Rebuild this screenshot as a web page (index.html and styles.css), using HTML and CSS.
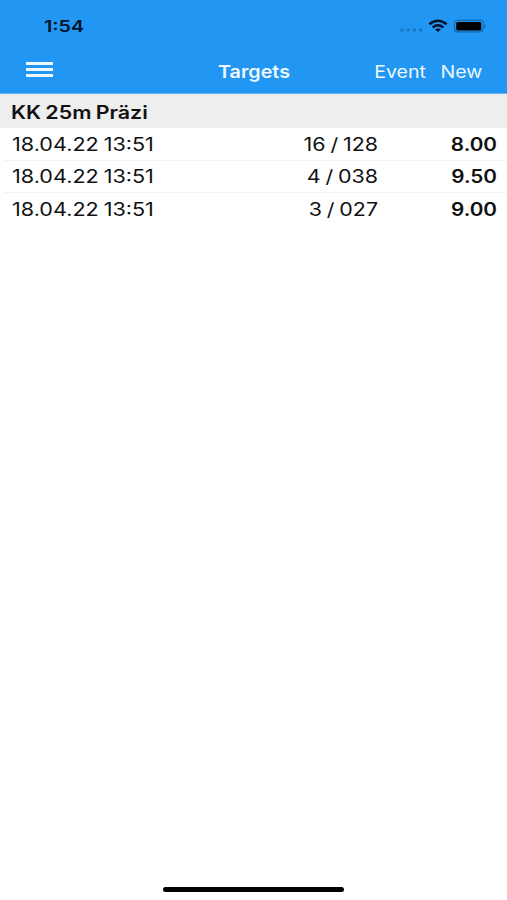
FILE: index.html
```html
<!DOCTYPE html>
<html lang="en">
<head>
<meta charset="utf-8">
<title>Targets</title>
<link rel="stylesheet" href="styles.css">
</head>
<body>
<div class="screen">
  <header class="header">
    <div class="status">
      <span class="time">1:54</span>
      <svg class="signals" width="90" height="16" viewBox="0 0 90 16">
        <g fill="#1a78c4"><circle cx="6" cy="12" r="1.8"/><circle cx="12.2" cy="12" r="1.8"/><circle cx="18.4" cy="12" r="1.8"/><circle cx="24.6" cy="12" r="1.8"/></g>
        <g fill="none" stroke="#001326" stroke-width="2.5"><path d="M33.4 6.2Q42 -.7 50.6 6.2"/><path d="M36.7 9.4Q42 5.2 47.3 9.4"/></g>
        <path d="M39.2 11.4Q42 9.5 44.8 11.4L42 13.9Z" fill="#001326"/>
        <rect x="58.4" y="2.4" width="28.6" height="11.4" rx="3" fill="none" stroke="#1769ac" stroke-width="1.2"/>
        <rect x="60.2" y="3.9" width="25" height="8.6" rx="1.5" fill="#000"/>
        <path d="M88.2 6q1.6 .5 1.6 2t-1.6 2Z" fill="#1769ac"/>
      </svg>
    </div>
    <nav class="nav">
      <div class="menu"><i></i><i></i><i></i></div>
      <h1 class="title">Targets</h1>
      <div class="actions"><span class="event">Event</span><span class="new">New</span></div>
    </nav>
  </header>
  <main>
    <h2 class="section"><span>KK 25m Präzi</span></h2>
    <div class="row"><span class="date">18.04.22 13:51</span><span class="count">16 / 128</span><b class="score">8.00</b></div>
    <div class="row"><span class="date">18.04.22 13:51</span><span class="count">4 / 038</span><b class="score">9.50</b></div>
    <div class="row"><span class="date">18.04.22 13:51</span><span class="count">3 / 027</span><b class="score">9.00</b></div>
  </main>
  <div class="home"></div>
</div>
</body>
</html>
```
FILE: styles.css
```css
* { box-sizing: border-box; }
body { margin: 0; background: #fff; font-family: Inter, "Liberation Sans", sans-serif; color: #111; }
.screen { width: 507px; height: 900px; display: flex; flex-direction: column; overflow: hidden; }
.header { height: 94px; background: #2196f3; border-bottom: 1px solid #64b4f5; }
.status { height: 52px; padding: 0 21px 0 44px; display: flex; justify-content: space-between; align-items: center; }
.signals { display: block; }
span, .title, .score { display: inline-block; white-space: nowrap; }
.time { padding-top: 2px; font-size: 15.5px; font-weight: 600; line-height: 20px; color: #001326; transform: scaleX(1.27); transform-origin: left; }
.nav { height: 38px; padding: 0 25px 0 26px; display: grid; grid-template-columns: 1fr auto 1fr; align-items: center; color: #eef8ff; }
.menu { width: 27px; display: grid; gap: 3px; margin-bottom: 3px; }
.menu i { height: 3px; background: #eef8ff; }
.title { margin: 0; padding-top: 2px; font-size: 17px; font-weight: 600; line-height: 22px; transform: scaleX(1.16); }
.actions { display: flex; justify-content: flex-end; gap: 20px; padding-top: 2px; font-size: 17px; line-height: 22px; }
.actions span { transform: scaleX(1.15); transform-origin: right; }
.section { height: 34px; margin: 0; padding: 8px 11px 4px; background: #eee; font-size: 18px; font-weight: 600; line-height: 22px; word-spacing: -1px; }
.section span { transform: scaleX(1.19); transform-origin: left; }
.row { height: 32.6px; margin-left: 4px; padding: 2px 10px 0 8px; display: grid; grid-template-columns: 1fr 174px 119px; align-items: center; border-bottom: 1px solid #f3f3f3; font-size: 18px; line-height: 22px; word-spacing: -1px; }
.row:last-child { border-bottom: 0; }
.date { transform: scaleX(1.2); transform-origin: left; }
.count, .score { text-align: right; transform: scaleX(1.19); transform-origin: right; }
.score { font-weight: 600; transform: scaleX(1.15); }
.home { width: 181px; height: 5px; margin: auto auto 8px 163px; border-radius: 3px; background: #000; }
```
